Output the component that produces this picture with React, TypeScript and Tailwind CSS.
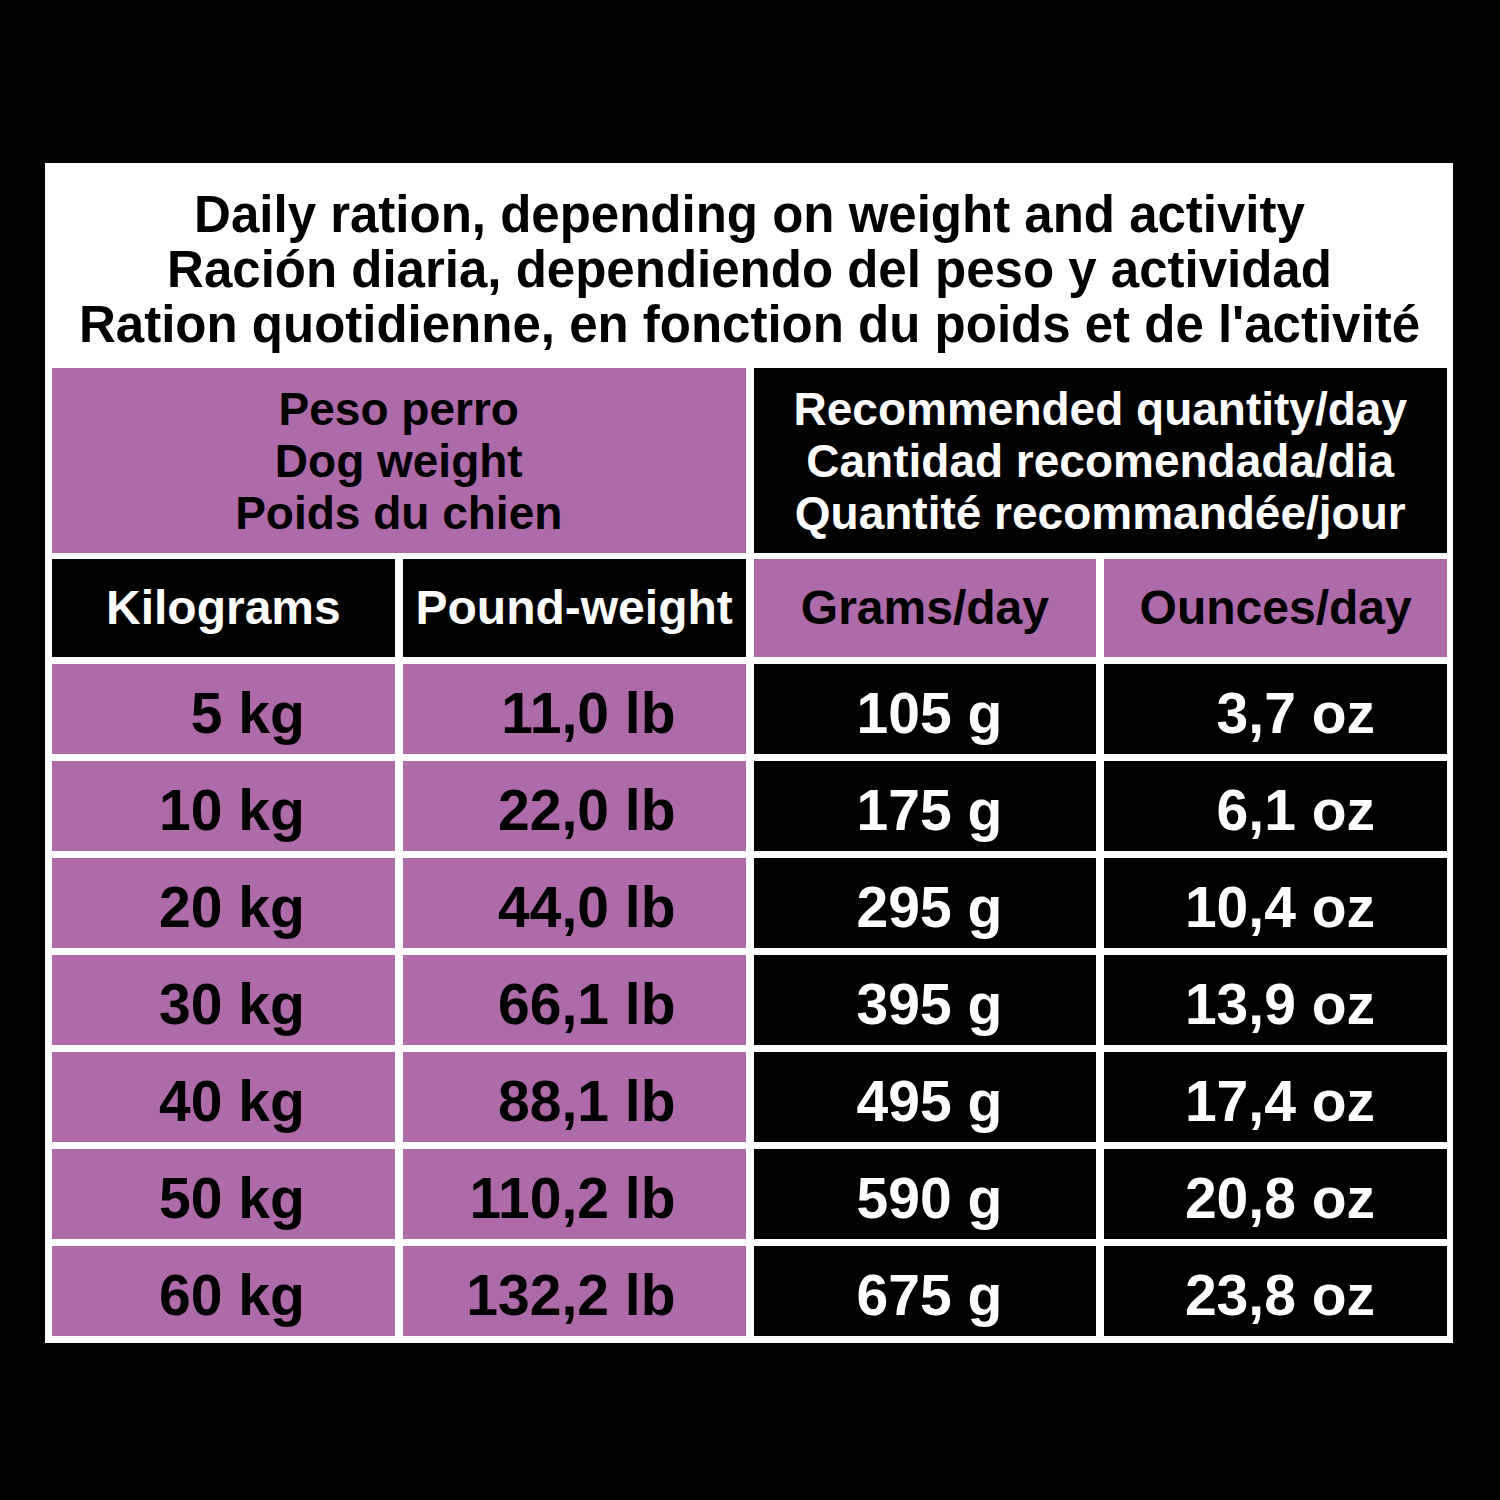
const ROWS: [string, string, string, string][] = [
  ["5 kg", "11,0 lb", "105 g", "3,7 oz"],
  ["10 kg", "22,0 lb", "175 g", "6,1 oz"],
  ["20 kg", "44,0 lb", "295 g", "10,4 oz"],
  ["30 kg", "66,1 lb", "395 g", "13,9 oz"],
  ["40 kg", "88,1 lb", "495 g", "17,4 oz"],
  ["50 kg", "110,2 lb", "590 g", "20,8 oz"],
  ["60 kg", "132,2 lb", "675 g", "23,8 oz"],
];

export default function App() {
  return (
    <div className="w-[1500px] h-[1500px] bg-black pt-[163px] pl-[45px] font-['Liberation_Sans',Arial,sans-serif] font-bold">
      <div className="w-[1408px] bg-white pl-[7px] pr-[6px] pb-[7px]">
        {/* Title */}
        <div className="pt-[24px] pb-[16px] text-center text-[51px] leading-[55px] text-black">
          <div>Daily ration, depending on weight and activity</div>
          <div>Ración diaria, dependiendo del peso y actividad</div>
          <div>Ration quotidienne, en fonction du poids et de l'activité</div>
        </div>

        <div className="grid grid-cols-4 gap-x-[8px] gap-y-[7px]">
          {/* Group headers */}
          <div className="col-span-2 h-[185px] bg-[#ae6aa9] flex flex-col items-center justify-center text-[46px] leading-[52px] text-black">
            <div>Peso perro</div>
            <div>Dog weight</div>
            <div>Poids du chien</div>
          </div>
          <div className="col-span-2 h-[185px] bg-black flex flex-col items-center justify-center text-[46px] leading-[52px] text-white">
            <div>Recommended quantity/day</div>
            <div>Cantidad recomendada/dia</div>
            <div>Quantité recommandée/jour</div>
          </div>

          {/* Column headers */}
          <div className="h-[98px] -mt-px bg-black text-white text-[48px] flex items-center justify-center">Kilograms</div>
          <div className="h-[98px] -mt-px bg-black text-white text-[48px] flex items-center justify-center">Pound-weight</div>
          <div className="h-[98px] -mt-px bg-[#ae6aa9] text-black text-[48px] flex items-center justify-center">Grams/day</div>
          <div className="h-[98px] -mt-px bg-[#ae6aa9] text-black text-[48px] flex items-center justify-center">Ounces/day</div>

          {/* Data rows */}
          {ROWS.map((r) => (
            <div key={r[0]} className="contents">
              <div className="h-[90px] bg-[#ae6aa9] text-black text-[57px] flex items-center justify-end pt-[10px] pr-[90px]">{r[0]}</div>
              <div className="h-[90px] bg-[#ae6aa9] text-black text-[57px] flex items-center justify-end pt-[10px] pr-[70px]">{r[1]}</div>
              <div className="h-[90px] bg-black text-white text-[57px] flex items-center justify-end pt-[10px] pr-[94px]">{r[2]}</div>
              <div className="h-[90px] bg-black text-white text-[57px] flex items-center justify-end pt-[10px] pr-[72px]">{r[3]}</div>
            </div>
          ))}
        </div>
      </div>
    </div>
  );
}
